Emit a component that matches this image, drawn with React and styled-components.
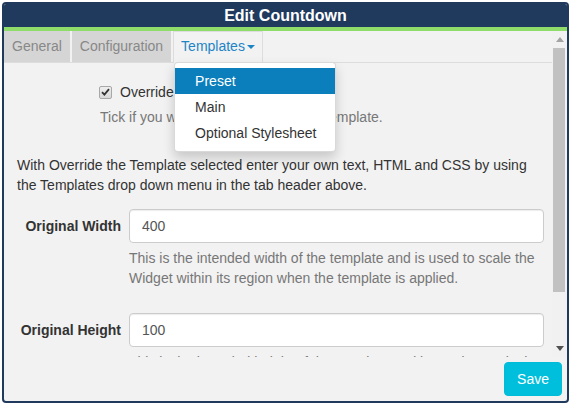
import React from 'react';
import styled, { createGlobalStyle } from 'styled-components';

const GlobalStyle = createGlobalStyle`
  html, body {
    margin: 0;
    padding: 0;
    background: #ffffff;
  }
  body {
    font-family: "Liberation Sans", Arial, sans-serif;
    font-size: 14px;
    color: #333333;
  }
  * {
    box-sizing: border-box;
  }
`;

const Dialog = styled.div`
  margin: 2px;
  width: 567px;
  height: 401px;
  border: 2px solid #203a5e;
  border-radius: 4px;
  background: #f2f2f2;
  display: flex;
  flex-direction: column;
  overflow: hidden;
`;

const TitleBar = styled.div`
  height: 27px;
  flex-shrink: 0;
  background: #203a5e;
  border-bottom: 4px solid #8fdc6a;
  color: #ffffff;
  font-weight: bold;
  font-size: 16px;
  line-height: 23px;
  text-align: center;
`;

const Body = styled.div`
  flex: 1;
  min-height: 0;
  display: flex;
`;

const Viewport = styled.div`
  flex: 1;
  min-width: 0;
  overflow: hidden;
`;

const ScrollBar = styled.div`
  width: 15px;
  flex-shrink: 0;
  background: #f1f1f1;
  display: flex;
  flex-direction: column;
`;

const ScrollButton = styled.div`
  height: 17px;
  display: flex;
  align-items: center;
  justify-content: center;
`;

const ScrollTrack = styled.div`
  flex: 1;
`;

const Thumb = styled.div`
  height: 244px;
  margin: 0 2px 0 1px;
  background: #c1c1c1;
`;

const TabBar = styled.div`
  display: flex;
  border-bottom: 1px solid #dddddd;
  height: 32px;
`;

const Tab = styled.div`
  position: relative;
  margin-right: 2px;
  line-height: 20px;
  white-space: nowrap;
  background: ${(p) => (p.$active ? '#f2f2f2' : '#d5d5d5')};
  color: ${(p) => (p.$active ? '#1d84c6' : '#888888')};
  border: ${(p) => (p.$active ? '1px solid #dddddd' : 'none')};
  border-bottom: none;
  padding: ${(p) => (p.$active ? '4px 7px 6px' : '5px 8px 6px')};
  height: ${(p) => (p.$active ? '32px' : '31px')};
`;

const Caret = styled.span`
  display: inline-block;
  width: 0;
  height: 0;
  margin-left: 2px;
  vertical-align: middle;
  border-top: 4px solid #1d84c6;
  border-left: 4px solid transparent;
  border-right: 4px solid transparent;
`;

const Menu = styled.ul`
  position: absolute;
  top: 30px;
  left: 0;
  z-index: 10;
  width: 162px;
  margin: 0;
  padding: 5px 0;
  list-style: none;
  background: #ffffff;
  border: 1px solid rgba(0, 0, 0, 0.15);
  border-radius: 4px;
  box-shadow: 0 6px 12px rgba(0, 0, 0, 0.175);
`;

const MenuItem = styled.li`
  height: 26px;
  line-height: 26px;
  padding: 0 20px;
  color: ${(p) => (p.$selected ? '#ffffff' : '#333333')};
  background: ${(p) => (p.$selected ? '#0b7fbb' : 'transparent')};
  white-space: nowrap;
`;

const Content = styled.div`
  padding: 19px 8px 36px 13px;
`;

const CheckRow = styled.label`
  display: flex;
  align-items: center;
  gap: 8px;
  margin-left: 82px;
  line-height: 20px;
`;

const CheckBox = styled.span`
  width: 13px;
  height: 13px;
  border: 1px solid #a8a8a8;
  border-radius: 2px;
  background: linear-gradient(#eeeeee, #d8d8d8);
  display: flex;
  align-items: center;
  justify-content: center;
`;

const HelpText = styled.div`
  color: #777777;
  line-height: 20px;
  margin-top: 5px;
  margin-left: ${(p) => p.$indent || 0}px;
`;

const Paragraph = styled.p`
  margin: 28px 0 0;
  line-height: 20px;
`;

const FormRow = styled.div`
  display: grid;
  grid-template-columns: 104px 1fr;
  column-gap: 8px;
  margin-top: ${(p) => p.$top}px;
`;

const Label = styled.div`
  font-weight: bold;
  text-align: right;
  line-height: 20px;
  padding-top: 7px;
  white-space: nowrap;
`;

const Input = styled.input`
  display: block;
  width: 100%;
  height: 34px;
  padding: 6px 12px;
  border: 1px solid #cccccc;
  border-radius: 4px;
  background: #ffffff;
  color: #555555;
  font-family: inherit;
  font-size: 14px;
  box-shadow: inset 0 1px 1px rgba(0, 0, 0, 0.075);
`;

const Footer = styled.div`
  height: 44px;
  flex-shrink: 0;
  display: flex;
  justify-content: flex-end;
  align-items: flex-start;
  padding: 5px 5px 0 0;
`;

const SaveButton = styled.button`
  height: 34px;
  padding: 6px 12px;
  border: 1px solid #00bcd8;
  border-radius: 4px;
  background: #00bfdd;
  color: #ffffff;
  font-family: inherit;
  font-size: 14px;
  line-height: 20px;
`;

const fields = [
  {
    label: 'Original Width',
    value: '400',
    help: 'This is the intended width of the template and is used to scale the Widget within its region when the template is applied.',
    top: 14,
  },
  {
    label: 'Original Height',
    value: '100',
    help: 'This is the intended height of the template and is used to scale the Widget within its region when the template is applied.',
    top: 25,
  },
];

const Arrow = ({ down }) => (
  <svg width="8" height="5" viewBox="0 0 8 5">
    <path d={down ? 'M0 0 L8 0 L4 5 Z' : 'M0 5 L4 0 L8 5 Z'} fill={down ? '#505050' : '#a3a3a3'} />
  </svg>
);

export default function App() {
  return (
    <>
      <GlobalStyle />
      <Dialog>
        <TitleBar>Edit Countdown</TitleBar>
        <Body>
          <Viewport>
            <TabBar>
              <Tab>General</Tab>
              <Tab>Configuration</Tab>
              <Tab $active>
                Templates<Caret />
                <Menu>
                  <MenuItem $selected>Preset</MenuItem>
                  <MenuItem>Main</MenuItem>
                  <MenuItem>Optional Stylesheet</MenuItem>
                </Menu>
              </Tab>
            </TabBar>
            <Content>
              <CheckRow>
                <CheckBox>
                  <svg width="9" height="8" viewBox="0 0 9 8">
                    <path d="M1 4.2 L3.4 6.6 L8 1.2" fill="none" stroke="#333" strokeWidth="1.8" />
                  </svg>
                </CheckBox>
                Override the template?
              </CheckRow>
              <HelpText $indent={83}>Tick if you would like to override the template.</HelpText>
              <Paragraph>
                With Override the Template selected enter your own text, HTML and CSS by using the
                Templates drop down menu in the tab header above.
              </Paragraph>
              {fields.map((f) => (
                <FormRow key={f.label} $top={f.top}>
                  <Label>{f.label}</Label>
                  <div>
                    <Input defaultValue={f.value} />
                    <HelpText>{f.help}</HelpText>
                  </div>
                </FormRow>
              ))}
            </Content>
          </Viewport>
          <ScrollBar>
            <ScrollButton>
              <Arrow />
            </ScrollButton>
            <ScrollTrack>
              <Thumb />
            </ScrollTrack>
            <ScrollButton>
              <Arrow down />
            </ScrollButton>
          </ScrollBar>
        </Body>
        <Footer>
          <SaveButton>Save</SaveButton>
        </Footer>
      </Dialog>
    </>
  );
}
